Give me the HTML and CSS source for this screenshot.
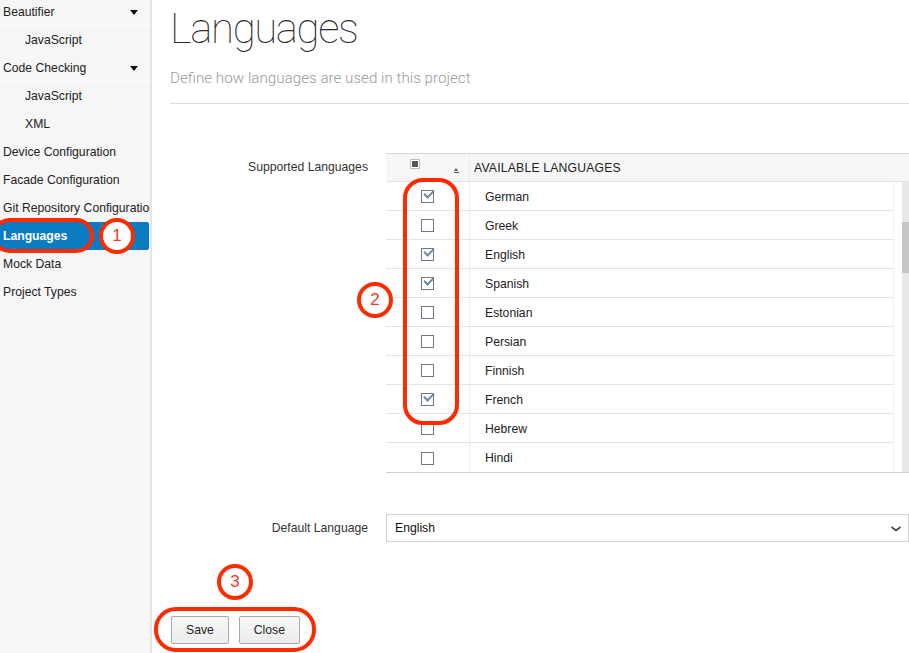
FILE: index.html
```html
<!DOCTYPE html>
<html>
<head>
<meta charset="utf-8">
<link rel="stylesheet" href="styles.css">
</head>
<body>
<div class="app">
  <nav class="sidebar">
    <div class="nav-item top group-head first">Beautifier<span class="caret"></span></div>
    <div class="nav-item sub">JavaScript</div>
    <div class="nav-item top group-head">Code Checking<span class="caret"></span></div>
    <div class="nav-item sub">JavaScript</div>
    <div class="nav-item sub">XML</div>
    <div class="nav-item top">Device Configuration</div>
    <div class="nav-item top">Facade Configuration</div>
    <div class="nav-item top">Git Repository Configuration</div>
    <div class="nav-item top active">Languages</div>
    <div class="nav-item top">Mock Data</div>
    <div class="nav-item top">Project Types</div>
  </nav>
  <main class="content">
    <header class="page-head">
      <h1 class="title">Languages</h1>
      <p class="subtitle">Define how languages are used in this project</p>
    </header>
    <section class="form">
      <div class="form-row">
        <label class="form-label top-label">Supported Languages</label>
        <div class="grid">
          <div class="grid-head">
            <div class="cell cb-cell"><span class="hcb"><span class="hcb-fill"></span></span><span class="sort"></span></div>
            <div class="cell name-cell head-name">AVAILABLE LANGUAGES</div>
          </div>
          <div class="grid-body">
            <div class="rows">
              <div class="row"><div class="cell cb-cell"><span class="cb checked"></span></div><div class="cell name-cell">German</div></div>
              <div class="row"><div class="cell cb-cell"><span class="cb"></span></div><div class="cell name-cell">Greek</div></div>
              <div class="row"><div class="cell cb-cell"><span class="cb checked"></span></div><div class="cell name-cell">English</div></div>
              <div class="row"><div class="cell cb-cell"><span class="cb checked"></span></div><div class="cell name-cell">Spanish</div></div>
              <div class="row"><div class="cell cb-cell"><span class="cb"></span></div><div class="cell name-cell">Estonian</div></div>
              <div class="row"><div class="cell cb-cell"><span class="cb"></span></div><div class="cell name-cell">Persian</div></div>
              <div class="row"><div class="cell cb-cell"><span class="cb"></span></div><div class="cell name-cell">Finnish</div></div>
              <div class="row"><div class="cell cb-cell"><span class="cb checked"></span></div><div class="cell name-cell">French</div></div>
              <div class="row"><div class="cell cb-cell"><span class="cb"></span></div><div class="cell name-cell">Hebrew</div></div>
              <div class="row"><div class="cell cb-cell"><span class="cb"></span></div><div class="cell name-cell">Hindi</div></div>
            </div>
            <div class="scrollbar"><div class="thumb"></div></div>
          </div>
        </div>
      </div>
      <div class="form-row select-row">
        <label class="form-label">Default Language</label>
        <div class="select">
          <span>English</span>
          <svg class="chev" width="12" height="8" viewBox="0 0 12 8"><path d="M1.5 2 L6 5.5 L10.5 2" fill="none" stroke="#444" stroke-width="1.6"/></svg>
        </div>
      </div>
    </section>
    <div class="buttons">
      <button class="btn">Save</button>
      <button class="btn">Close</button>
    </div>
  </main>
</div>

<div class="mark pill-nav"></div>
<div class="mark badge b1">1</div>
<div class="mark pill-checks"></div>
<div class="mark badge b2">2</div>
<div class="mark badge b3">3</div>
<div class="mark pill-buttons"></div>
</body>
</html>
```

FILE: styles.css
```css
html, body {
  margin: 0;
  padding: 0;
  background: #fff;
  font-family: "Liberation Sans", Arial, sans-serif;
  font-size: 12.2px;
  color: #333;
}
body {
  position: relative;
  width: 909px;
  height: 653px;
  overflow: hidden;
}
.app {
  display: flex;
  height: 653px;
}
.sidebar {
  width: 150px;
  flex: none;
  background: #f6f6f6;
  border-right: 2px solid #e2e5ea;
  overflow: hidden;
}
.nav-item {
  position: relative;
  height: 28px;
  line-height: 27px;
  padding-top: 1px;
  box-sizing: border-box;
  white-space: nowrap;
  overflow: hidden;
  color: #222;
}
.nav-item.first { margin-top: -2px; }
.nav-item.top { padding-left: 3px; }
.nav-item.sub { padding-left: 25px; }
.nav-item.group-head { border-bottom: 1px solid #fff; }
.caret {
  position: absolute;
  right: 12px;
  top: 12px;
  width: 0;
  height: 0;
  border-left: 4.5px solid transparent;
  border-right: 4.5px solid transparent;
  border-top: 5px solid #111;
}
.nav-item.active {
  background: #0b7bc2;
  color: #fff;
  font-weight: bold;
  border-radius: 0 2px 2px 0;
  margin-right: 1px;
}

.content {
  flex: 1;
  padding-left: 18px;
  min-width: 0;
}
.page-head {
  border-bottom: 1px solid #dcdcdc;
  height: 103px;
}
.title {
  margin: 0;
  padding-top: 3px;
  font-family: Roboto, "Liberation Sans", sans-serif;
  font-weight: 100;
  font-size: 42px;
  line-height: 52px;
  color: #2b2b2b;
  letter-spacing: -1.4px;
}
.subtitle {
  margin: 14px 0 0 0;
  font-family: Roboto, "Liberation Sans", sans-serif;
  font-weight: 300;
  font-size: 15.2px;
  color: #9a9a9a;
}

.form {
  padding-top: 49px;
  display: flex;
  flex-direction: column;
  gap: 41px;
}
.form-row {
  display: grid;
  grid-template-columns: 198px 1fr;
  column-gap: 18px;
  align-items: center;
}
.form-row:first-child { align-items: start; }
.form-label {
  text-align: right;
  color: #333;
}
.top-label {
  line-height: 28px;
}

.grid {
  border-top: 1px solid #d8d8d8;
  border-bottom: 1px solid #cfcfcf;
}
.grid-head {
  display: flex;
  height: 27px;
  background: #f6f6f6;
  border-bottom: 1px solid #e2e2e2;
}
.cell {
  display: flex;
  align-items: center;
}
.cb-cell {
  width: 84px;
  flex: none;
  justify-content: center;
  position: relative;
  border-right: 1px solid #f0f0f0;
  box-sizing: border-box;
}
.grid-head .cb-cell { border-right-color: #ececec; }
.name-cell {
  padding-left: 15px;
  color: #222;
  padding-top: 1px;
}
.head-name {
  padding-left: 4px;
  color: #222;
  letter-spacing: 0.2px;
}
.hcb {
  position: absolute;
  left: 24px;
  top: 5px;
  width: 10px;
  height: 10px;
  border: 1px solid #bdbdbd;
  background: #fff;
  box-sizing: border-box;
  display: flex;
  align-items: center;
  justify-content: center;
}
.hcb-fill {
  width: 6px;
  height: 6px;
  background: #555;
}
.sort {
  position: absolute;
  right: 10px;
  top: 14px;
  width: 5px;
  height: 4px;
  border-bottom: 1px solid #555;
}
.sort::before {
  content: "";
  position: absolute;
  left: 0;
  top: 0;
  border-left: 2.5px solid transparent;
  border-right: 2.5px solid transparent;
  border-bottom: 3px solid #555;
}
.grid-body {
  display: flex;
}
.rows {
  flex: 1;
  border-right: 1px solid #f0f0f0;
  margin-right: 8px;
}
.row {
  display: flex;
  height: 29px;
  box-sizing: border-box;
  border-bottom: 1px solid #e3e3e3;
}
.row:last-child { border-bottom: none; }
.cb {
  position: relative;
  width: 13px;
  height: 13px;
  border: 1.5px solid #6c7886;
  box-sizing: border-box;
  background: #fff;
  margin-left: -1px;
  margin-top: 1px;
}
.cb.checked::after {
  content: "";
  position: absolute;
  left: 2px;
  top: -1px;
  width: 8px;
  height: 4px;
  border-left: 2px solid #6f86a0;
  border-bottom: 2px solid #6f86a0;
  transform: rotate(-45deg);
  transform-origin: center;
}
.scrollbar {
  width: 7px;
  flex: none;
  background: #e9e9e9;
  position: relative;
}
.thumb {
  position: absolute;
  left: 0;
  right: 0;
  top: 40px;
  height: 51px;
  background: #c6c6c6;
}

.select {
  height: 28px;
  box-sizing: border-box;
  border: 1px solid #d2d2d2;
  display: flex;
  align-items: center;
  justify-content: space-between;
  padding: 0 6px 0 8px;
  color: #111;
}
.chev { margin-top: 1px; }

.buttons {
  display: flex;
  gap: 10px;
  margin-top: 74px;
  padding-left: 1px;
}
.btn {
  font-family: "Liberation Sans", Arial, sans-serif;
  font-size: 12.2px;
  color: #222;
  height: 28px;
  padding: 0 14px;
  background: linear-gradient(#f8f8f8, #ececec);
  border: 1px solid #a9a9a9;
  border-radius: 2px;
}

.mark {
  position: absolute;
  box-sizing: border-box;
  border: 4px solid #ff2a00;
}
.badge {
  width: 36px;
  height: 36px;
  border-radius: 50%;
  background: #fff;
  color: #f03a2a;
  font-size: 17px;
  font-family: "Liberation Sans", Arial, sans-serif;
  display: flex;
  align-items: center;
  justify-content: center;
}
.b1 { left: 99px; top: 218px; }
.b2 { left: 357px; top: 282px; }
.b3 { left: 217px; top: 564px; }
.pill-nav {
  left: -8px;
  top: 218px;
  width: 102px;
  height: 35px;
  border-radius: 18px;
}
.pill-checks {
  left: 403px;
  top: 178px;
  width: 56px;
  height: 247px;
  border-radius: 20px;
}
.pill-buttons {
  left: 154px;
  top: 607px;
  width: 162px;
  height: 45px;
  border-radius: 22px;
}
```
